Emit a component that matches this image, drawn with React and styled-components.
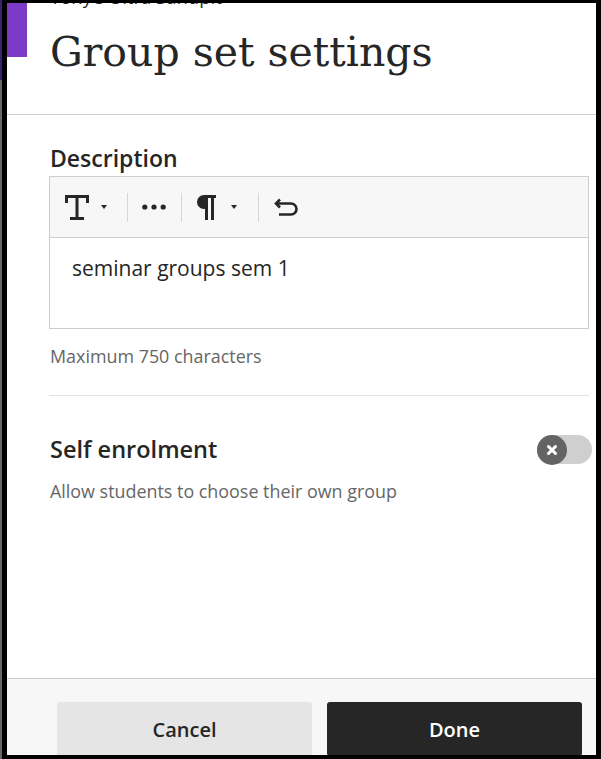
import React from 'react'
import styled, { createGlobalStyle } from 'styled-components';

const GlobalStyle = createGlobalStyle`
  html, body {
    margin: 0;
    padding: 0;
    background: #000;
  }
  body {
    font-family: "Open Sans", "Noto Sans", sans-serif;
    color: #262626;
  }
`;

function TextIcon() {
  return (
    <svg width="24" height="25" viewBox="0 0 24 25" fill="currentColor">
      <path d="M0 0H24V8H21V3H13.5V22H19V25H5V22H10.5V3H3V8H0Z" />
    </svg>
  );
}

function DotsIcon() {
  return (
    <svg width="24" height="6" viewBox="0 0 24 6" fill="currentColor">
      <circle cx="2.8" cy="3" r="2.6" />
      <circle cx="12" cy="3" r="2.6" />
      <circle cx="21.2" cy="3" r="2.6" />
    </svg>
  );
}

function ParagraphIcon() {
  return (
    <svg width="19" height="25" viewBox="0 0 19 25" fill="currentColor">
      <path d="M7 0H19V3H17V25H14V3H11V25H8V14H7A7 7 0 0 1 7 0Z" />
    </svg>
  );
}

function UndoIcon() {
  return (
    <svg width="24" height="18" viewBox="0 0 24 18" fill="none" stroke="currentColor" strokeWidth="2.6">
      <path d="M6 1.5L2 5.5L6 9.5" strokeLinejoin="miter" />
      <path d="M2 5.5H17A5.5 5.5 0 0 1 17 16.5H5" />
    </svg>
  );
}

function CrossIcon() {
  return (
    <svg width="12" height="12" viewBox="0 0 12 12" fill="none" stroke="#fff" strokeWidth="3" strokeLinecap="round">
      <path d="M2.5 2.5L9.5 9.5M9.5 2.5L2.5 9.5" />
    </svg>
  );
}

const App = () => {
  return (
    <>
      <GlobalStyle />
      <Frame>
        <LeftEdge />
        <Panel>
          <CloseTab />
          <Header>
            <Subtitle>Tony’s Ultra Sandpit</Subtitle>
            <Title>Group set settings</Title>
          </Header>

          <Body>
            <FieldLabel>Description</FieldLabel>
            <Editor>
              <Toolbar>
                <ToolButton $w={77}>
                  <TextIcon />
                  <Caret $gap={12} />
                </ToolButton>
                <ToolDivider />
                <ToolButton $w={53} $pad={14}>
                  <DotsIcon />
                </ToolButton>
                <ToolDivider />
                <ToolButton $w={76}>
                  <ParagraphIcon />
                  <Caret $gap={15} />
                </ToolButton>
                <ToolDivider />
                <ToolButton $w={60}>
                  <UndoIcon />
                </ToolButton>
              </Toolbar>
              <EditorContent>seminar groups sem 1</EditorContent>
            </Editor>
            <Hint>Maximum 750 characters</Hint>

            <Divider />

            <SettingRow>
              <SettingTitle>Self enrolment</SettingTitle>
              <Toggle type="button" aria-pressed="false">
                <Knob>
                  <CrossIcon />
                </Knob>
              </Toggle>
            </SettingRow>
            <Hint $top={15}>Allow students to choose their own group</Hint>
          </Body>

          <Footer>
            <Button type="button">Cancel</Button>
            <Button type="button" $primary>Done</Button>
          </Footer>
        </Panel>
      </Frame>
    </>
  )
}

const Frame = styled.div`
  display: flex;
  width: 601px;
  height: 759px;
  box-sizing: border-box;
  padding: 3px 5px 4px 0;
  background: #000;
  overflow: hidden;
`;

const LeftEdge = styled.div`
  position: relative;
  flex-shrink: 0;
  width: 7px;
  margin: -3px 0 -4px;
  box-sizing: border-box;
  border-left: 2px solid #676767;
  background: #000;

  &::before {
    content: "";
    position: absolute;
    left: -2px;
    top: 0;
    width: 2px;
    height: 80px;
    background: #3b2270;
  }
`;

const Panel = styled.div`
  position: relative;
  flex: 1;
  display: flex;
  flex-direction: column;
  background: #fff;
  overflow: hidden;
`;

const CloseTab = styled.div`
  position: absolute;
  left: 0;
  top: 0;
  width: 20px;
  height: 54px;
  background: #7c3bc6;
`;

const Header = styled.header`
  flex-shrink: 0;
  height: 112px;
  box-sizing: border-box;
  padding: 0 43px;
  border-bottom: 1px solid #cdcdcd;
`;

const Subtitle = styled.div`
  margin-top: -18px;
  font-size: 18.5px;
  line-height: 24px;
  white-space: nowrap;
`;

const Title = styled.h1`
  margin: 15px 0 0;
  font-family: "DejaVu Serif", serif;
  font-weight: 400;
  font-size: 41px;
  line-height: 56px;
  color: #262626;
  white-space: nowrap;
`;

const Body = styled.main`
  flex: 1;
  padding: 29px 7px 0 42px;
`;

const FieldLabel = styled.div`
  margin: 0 0 3px 1px;
  font-size: 23px;
  font-weight: 600;
  line-height: 29px;
`;

const Editor = styled.div`
  border: 1px solid #cdcdcd;
`;

const Toolbar = styled.div`
  display: flex;
  align-items: center;
  height: 60px;
  background: #f7f7f7;
  border-bottom: 1px solid #cdcdcd;
`;

const ToolButton = styled.div`
  display: flex;
  align-items: center;
  flex-shrink: 0;
  box-sizing: border-box;
  width: ${(p) => p.$w}px;
  height: 100%;
  padding-left: ${(p) => p.$pad ?? 15}px;
  color: #262626;
`;

const Caret = styled.span`
  width: 0;
  height: 0;
  margin-left: ${(p) => p.$gap}px;
  border-left: 3px solid transparent;
  border-right: 3px solid transparent;
  border-top: 4px solid #262626;
`;

const ToolDivider = styled.span`
  flex-shrink: 0;
  width: 1px;
  height: 29px;
  background: #d6d6d6;
`;

const EditorContent = styled.div`
  height: 90px;
  box-sizing: border-box;
  padding: 17px 22px;
  font-size: 21px;
  line-height: 27px;
`;

const Hint = styled.p`
  margin: ${(p) => p.$top ?? 15}px 0 0 1px;
  font-size: 17.9px;
  line-height: 24px;
  color: #666;
`;

const Divider = styled.hr`
  height: 0;
  margin: 27px 0 0;
  border: 0;
  border-top: 1px solid #e3e3e3;
`;

const SettingRow = styled.div`
  display: flex;
  align-items: center;
  justify-content: space-between;
  height: 30px;
  margin-top: 38px;
`;

const SettingTitle = styled.div`
  margin-left: 1px;
  font-size: 23.5px;
  font-weight: 600;
  line-height: 30px;
`;

const Toggle = styled.button`
  position: relative;
  width: 55px;
  height: 29px;
  margin-right: -3px;
  padding: 0;
  border: 0;
  border-radius: 15px;
  background: #cfcfcf;
`;

const Knob = styled.span`
  position: absolute;
  left: 0;
  top: 0;
  display: flex;
  align-items: center;
  justify-content: center;
  width: 30px;
  height: 30px;
  border-radius: 50%;
  background: #646464;
`;

const Footer = styled.footer`
  flex-shrink: 0;
  display: flex;
  gap: 15px;
  height: 77px;
  box-sizing: border-box;
  padding: 23px 14px 0 50px;
  border-top: 1px solid #cdcdcd;
  background: #f7f7f7;
  overflow: hidden;
`;

const Button = styled.button`
  flex: 0 0 255px;
  height: 54px;
  border: 0;
  border-radius: 3px;
  font-family: inherit;
  font-size: 20px;
  font-weight: 600;
  background: ${(p) => (p.$primary ? '#262626' : '#e5e5e5')};
  color: ${(p) => (p.$primary ? '#fff' : '#262626')};
`;

export default App
